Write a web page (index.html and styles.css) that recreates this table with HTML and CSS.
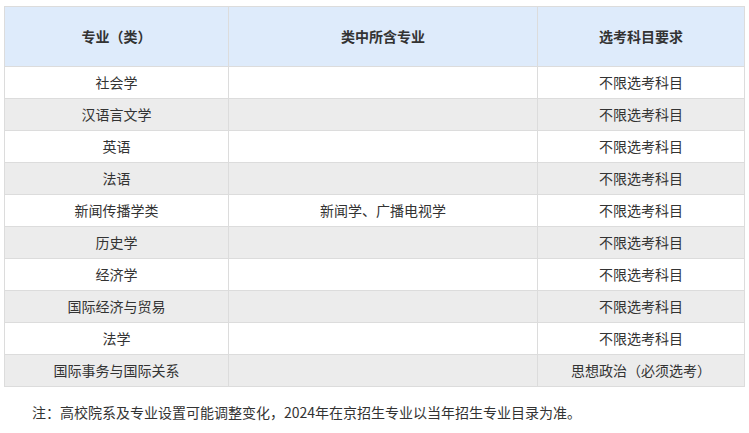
FILE: index.html
```html
<!DOCTYPE html>
<html lang="zh">
<head>
<meta charset="utf-8">
<link rel="stylesheet" href="styles.css">
</head>
<body>
<div class="wrap">
<table class="majors">
  <colgroup>
    <col class="c1"><col class="c2"><col class="c3">
  </colgroup>
  <thead>
    <tr><th>专业（类）</th><th>类中所含专业</th><th>选考科目要求</th></tr>
  </thead>
  <tbody>
    <tr><td>社会学</td><td></td><td>不限选考科目</td></tr>
    <tr><td>汉语言文学</td><td></td><td>不限选考科目</td></tr>
    <tr><td>英语</td><td></td><td>不限选考科目</td></tr>
    <tr><td>法语</td><td></td><td>不限选考科目</td></tr>
    <tr><td>新闻传播学类</td><td>新闻学、广播电视学</td><td>不限选考科目</td></tr>
    <tr><td>历史学</td><td></td><td>不限选考科目</td></tr>
    <tr><td>经济学</td><td></td><td>不限选考科目</td></tr>
    <tr><td>国际经济与贸易</td><td></td><td>不限选考科目</td></tr>
    <tr><td>法学</td><td></td><td>不限选考科目</td></tr>
    <tr><td>国际事务与国际关系</td><td></td><td>思想政治（必须选考）</td></tr>
  </tbody>
</table>
<p class="note">注：高校院系及专业设置可能调整变化，2024年在京招生专业以当年招生专业目录为准。</p>
</div>
</body>
</html>
```
FILE: styles.css
```css
html, body {
  margin: 0;
  padding: 0;
  background: #fff;
}
body {
  font-family: "Microsoft YaHei", "Noto Sans CJK SC", "Noto Sans", sans-serif;
  font-size: 14px;
  color: #333;
}
.wrap {
  padding: 6px 5px 0 4px;
}
.majors {
  width: 740px;
  border-collapse: collapse;
  table-layout: fixed;
}
.c1 { width: 224px; }
.c2 { width: 309px; }
.c3 { width: 207px; }
.majors th,
.majors td {
  border: 1px solid #dcdcdc;
  text-align: center;
  padding: 0 4px;
  font-size: 14px;
  line-height: 20px;
}
.majors th {
  height: 58px;
  padding-bottom: 1px;
  background: #deebfb;
  font-weight: bold;
  color: #333;
}
.majors td {
  height: 29px;
  padding-bottom: 2px;
}
.majors tbody tr:nth-child(even) td {
  background: #ececec;
}
.note {
  margin: 14px 0 0;
  text-indent: 28px;
  line-height: 22px;
  font-size: 14px;
}
```
